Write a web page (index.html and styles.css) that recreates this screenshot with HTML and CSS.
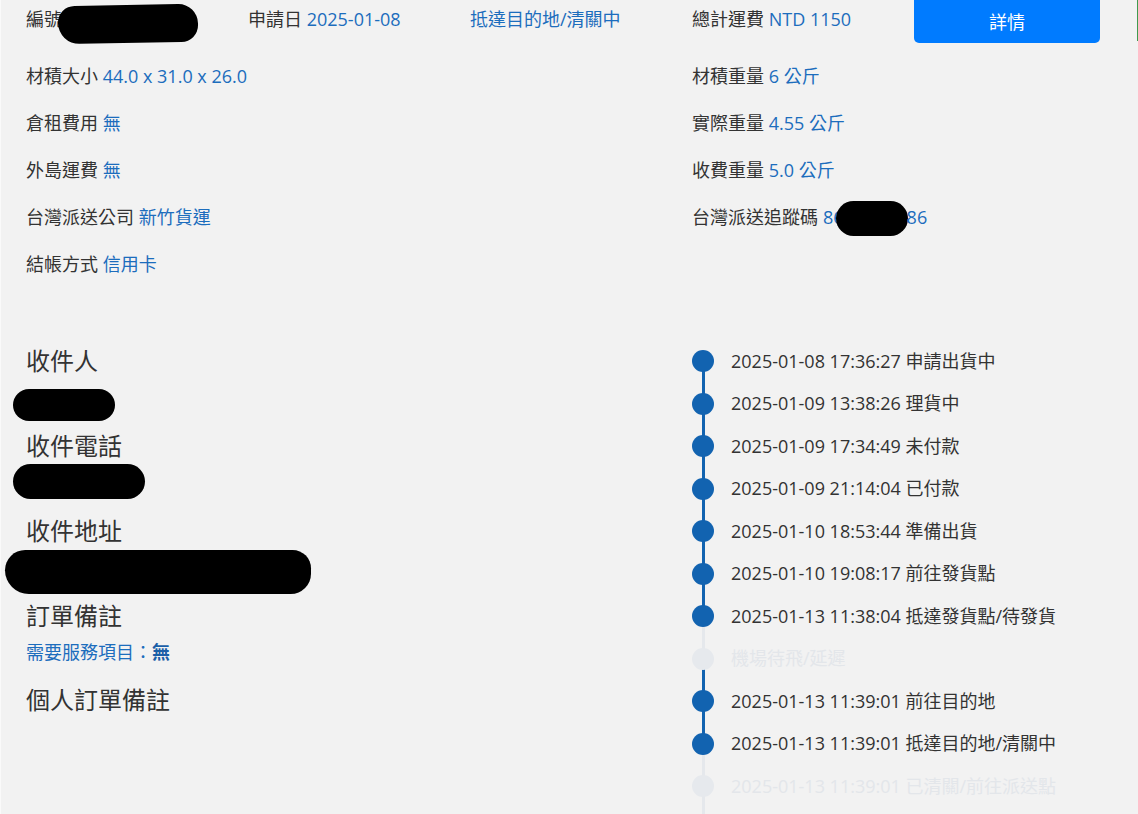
FILE: index.html
```html
<!DOCTYPE html>
<html lang="zh-Hant">
<head>
<meta charset="utf-8">
<title>訂單詳情</title>
<link rel="stylesheet" href="styles.css">
</head>
<body>
<div class="page">
  <div class="edge-mark"></div>
  <div class="grid top-row">
    <div class="cell span1 with-blob"><span class="label">編號</span><span class="redact redact-id"></span></div>
    <div class="cell span1"><span class="label">申請日</span> <span class="value">2025-01-08</span></div>
    <div class="cell span1"><span class="value">抵達目的地/清關中</span></div>
    <div class="cell span1"><span class="label">總計運費</span> <span class="value">NTD 1150</span></div>
    <div class="cell span1"><button class="btn-detail">詳情</button></div>
  </div>

  <div class="grid info-row">
    <div class="cell span3"><span class="label">材積大小</span> <span class="value">44.0 x 31.0 x 26.0</span></div>
    <div class="cell span2"><span class="label">材積重量</span> <span class="value">6 公斤</span></div>
  </div>
  <div class="grid info-row">
    <div class="cell span3"><span class="label">倉租費用</span> <span class="value">無</span></div>
    <div class="cell span2"><span class="label">實際重量</span> <span class="value">4.55 公斤</span></div>
  </div>
  <div class="grid info-row">
    <div class="cell span3"><span class="label">外島運費</span> <span class="value">無</span></div>
    <div class="cell span2"><span class="label">收費重量</span> <span class="value">5.0 公斤</span></div>
  </div>
  <div class="grid info-row">
    <div class="cell span3"><span class="label">台灣派送公司</span> <span class="value">新竹貨運</span></div>
    <div class="cell span2 track"><span class="label">台灣派送追蹤碼</span><span class="value gap">86</span><span class="redact redact-track"></span><span class="value">86</span></div>
  </div>
  <div class="grid info-row">
    <div class="cell span3"><span class="label">結帳方式</span> <span class="value">信用卡</span></div>
    <div class="cell span2"></div>
  </div>

  <div class="grid detail">
    <div class="cell span3 receiver">
      <h3 class="heading">收件人</h3>
      <div class="redact redact-name"></div>
      <h3 class="heading h-phone">收件電話</h3>
      <div class="redact redact-phone"></div>
      <h3 class="heading h-addr">收件地址</h3>
      <div class="redact redact-addr"></div>
      <h3 class="heading h-note">訂單備註</h3>
      <p class="service">需要服務項目：<b>無</b></p>
      <h3 class="heading h-personal">個人訂單備註</h3>
    </div>
    <div class="cell span2">
      <ul class="timeline">
        <li class="step done first"><span class="marker"><span class="dot"></span></span><span class="step-text">2025-01-08 17:36:27 申請出貨中</span></li>
        <li class="step done"><span class="marker"><span class="dot"></span></span><span class="step-text">2025-01-09 13:38:26 理貨中</span></li>
        <li class="step done"><span class="marker"><span class="dot"></span></span><span class="step-text">2025-01-09 17:34:49 未付款</span></li>
        <li class="step done"><span class="marker"><span class="dot"></span></span><span class="step-text">2025-01-09 21:14:04 已付款</span></li>
        <li class="step done"><span class="marker"><span class="dot"></span></span><span class="step-text">2025-01-10 18:53:44 準備出貨</span></li>
        <li class="step done"><span class="marker"><span class="dot"></span></span><span class="step-text">2025-01-10 19:08:17 前往發貨點</span></li>
        <li class="step done"><span class="marker"><span class="dot"></span></span><span class="step-text">2025-01-13 11:38:04 抵達發貨點/待發貨</span></li>
        <li class="step pending"><span class="marker"><span class="dot"></span></span><span class="step-text">機場待飛/延遲</span></li>
        <li class="step done"><span class="marker"><span class="dot"></span></span><span class="step-text">2025-01-13 11:39:01 前往目的地</span></li>
        <li class="step done"><span class="marker"><span class="dot"></span></span><span class="step-text">2025-01-13 11:39:01 抵達目的地/清關中</span></li>
        <li class="step pending continues"><span class="marker"><span class="dot"></span></span><span class="step-text">2025-01-13 11:39:01 已清關/前往派送點</span></li>
      </ul>
    </div>
  </div>
</div>
</body>
</html>
```

FILE: styles.css
```css
html, body {
  margin: 0;
  padding: 0;
}

body {
  background: #fafafa;
  font-family: "Open Sans", "Noto Sans CJK TC", sans-serif;
  font-size: 18px;
  color: #333333;
  overflow: hidden;
}

.page {
  margin-left: 1px;
  margin-top: -4px;
  padding-left: 3px;
  background: #f2f2f2;
  min-height: 900px;
}

.edge-mark {
  position: fixed;
  top: 0;
  right: 0;
  width: 1px;
  height: 41px;
  background: #3f9a4e;
}

.grid {
  display: grid;
  grid-template-columns: repeat(5, 222px);
}

.cell {
  padding-left: 22px;
  line-height: 27px;
  white-space: nowrap;
}

.span1 { grid-column: span 1; }
.span2 { grid-column: span 2; }
.span3 { grid-column: span 3; }

.top-row {
  align-items: center;
}

.with-blob {
  display: flex;
  align-items: center;
}

.label {
  color: #333333;
}

.value {
  color: #1c6dbd;
}

.btn-detail {
  display: block;
  width: 186px;
  height: 47px;
  border: none;
  border-radius: 5px;
  background: #007bff;
  color: #ffffff;
  font-family: inherit;
  font-size: 18px;
  padding: 0;
  padding-top: 2px;
}

.info-row {
  margin-bottom: 20px;
}

.info-row .cell {
  height: 27px;
}

.top-row + .info-row {
  margin-top: 20px;
}

.track {
  display: flex;
  align-items: center;
}

.gap {
  margin-left: 5px;
}

.redact {
  background: #000000;
}

.redact-id {
  display: inline-block;
  width: 140px;
  height: 38px;
  margin-left: -4px;
  margin-top: 8px;
  border-radius: 19px 22px 19px 24px;
  transform: rotate(-1deg);
}

.redact-track {
  flex: none;
  width: 72px;
  height: 35px;
  margin-left: -8px;
  margin-right: -1px;
  margin-top: 2px;
  border-radius: 18px;
}

/* detail section */
.detail {
  margin-top: 62px;
}

.receiver {
  padding-top: 4px;
}

.heading {
  margin: 0;
  font-size: 24px;
  font-weight: normal;
  line-height: 34px;
  color: #333333;
}

.redact-name {
  width: 102px;
  height: 32px;
  margin-left: -13px;
  margin-top: 11px;
  border-radius: 16px;
}

.h-phone { margin-top: 8px; }

.redact-phone {
  width: 132px;
  height: 35px;
  margin-left: -13px;
  margin-top: 1px;
  border-radius: 18px;
}

.h-addr { margin-top: 15px; }

.redact-addr {
  width: 306px;
  height: 44px;
  margin-left: -21px;
  margin-top: 2px;
  border-radius: 22px 20px 22px 26px;
}

.h-note { margin-top: 5px; }

.service {
  margin: 6px 0 0;
  line-height: 27px;
  color: #1c6dbd;
}

.service b {
  font-weight: bold;
  color: #1a5fa8;
}

.h-personal { margin-top: 17px; }

/* timeline */
.timeline {
  list-style: none;
  margin: 0;
  padding: 0;
}

.step {
  display: flex;
  align-items: center;
  height: 42.5px;
}

.marker {
  position: relative;
  align-self: stretch;
  width: 22px;
  display: flex;
  align-items: center;
  justify-content: center;
  flex: none;
}

.marker::before {
  content: "";
  position: absolute;
  left: 9.5px;
  width: 3px;
  top: -50%;
  height: 100%;
}

.first .marker::before {
  display: none;
}

.continues .marker::after {
  content: "";
  position: absolute;
  left: 9.5px;
  width: 3px;
  top: 50%;
  height: 100%;
  background: #e5e8ec;
}

.dot {
  position: relative;
  z-index: 1;
  width: 22px;
  height: 22px;
  border-radius: 50%;
}

.step-text {
  margin-left: 17px;
  line-height: 27px;
  white-space: nowrap;
}

.done .dot,
.done .marker::before {
  background: #1263b0;
}

.done .step-text {
  color: #333333;
}

.pending .dot {
  background: #e6e9ed;
}

.pending .marker::before {
  background: #e5e8ec;
}

.pending .step-text {
  color: #e3e6ea;
}
```
